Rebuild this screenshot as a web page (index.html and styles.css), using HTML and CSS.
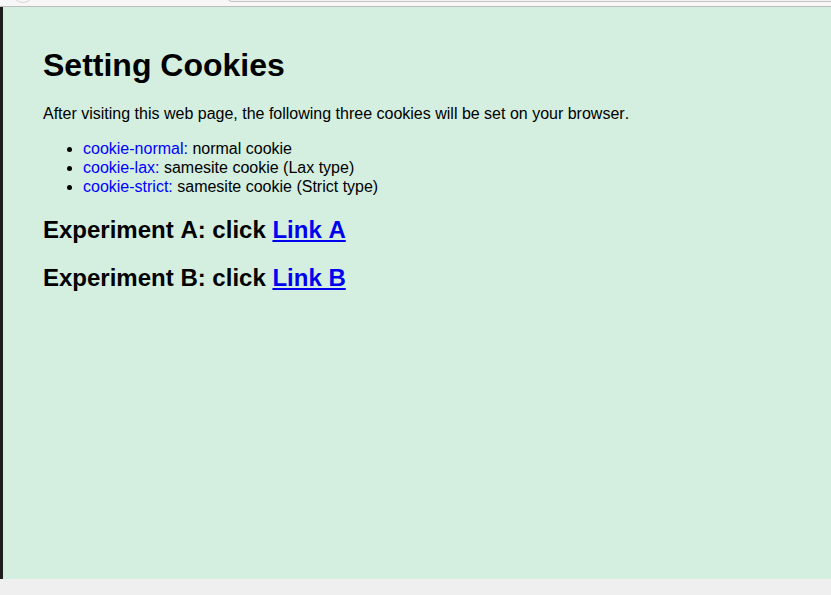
FILE: index.html
```html
<!DOCTYPE html>
<html>
<head>
<meta charset="utf-8">
<title>Setting Cookies</title>
<link rel="stylesheet" href="styles.css">
</head>
<body>
<div class="topbar">
  <span class="tb-circle"></span>
  <span class="tb-url"></span>
</div>
<div class="frame">
  <div class="edge"></div>
  <main class="content">
    <h1>Setting Cookies</h1>
    <p>After visiting this web page, the following three cookies will be set on your browser.</p>
    <ul>
      <li><span class="ck">cookie-normal:</span> normal cookie</li>
      <li><span class="ck">cookie-lax:</span> samesite cookie (Lax type)</li>
      <li><span class="ck">cookie-strict:</span> samesite cookie (Strict type)</li>
    </ul>
    <h2>Experiment A: click <a href="#">Link A</a></h2>
    <h2>Experiment B: click <a href="#">Link B</a></h2>
  </main>
</div>
</body>
</html>
```
FILE: styles.css
```css
html, body {
  margin: 0;
  padding: 0;
}
body {
  background: #efefef;
  font-family: "Liberation Sans", Arial, sans-serif;
  font-kerning: none;
  color: #000;
  height: 595px;
  overflow: hidden;
}
.topbar {
  height: 6px;
  background: #f7f7f7;
  border-bottom: 1px solid #bdbdbd;
  display: flex;
  align-items: flex-end;
  overflow: hidden;
}
.tb-circle {
  flex: none;
  width: 20px;
  height: 20px;
  border: 1px solid #d6d6d6;
  border-radius: 50%;
  margin: 0 0 3px 12px;
}
.tb-url {
  flex: 1;
  height: 20px;
  margin: 0 0 4px 194px;
  border: 1px solid #c4c4c4;
  border-right: none;
  border-radius: 4px 0 0 4px;
  background: #f3f3f3;
}
.frame {
  display: flex;
  height: 572px;
}
.edge {
  width: 3px;
  background: #1e1e1e;
  flex: none;
}
.content {
  flex: 1;
  background: #d4eedf;
  padding: 40px 40px;
}
h1 {
  font-size: 32px;
  font-weight: bold;
  margin: 0 0 21px;
}
p {
  font-size: 16px;
  margin: 16px 0;
}
ul {
  font-size: 16px;
  margin: 16px 0;
  padding-left: 40px;
}
li {
  line-height: 19px;
}
.ck {
  color: #0000ff;
}
h2 {
  font-size: 24px;
  font-weight: bold;
  margin: 20px 0;
}
a {
  color: #0000ee;
  text-decoration: underline;
}
```
